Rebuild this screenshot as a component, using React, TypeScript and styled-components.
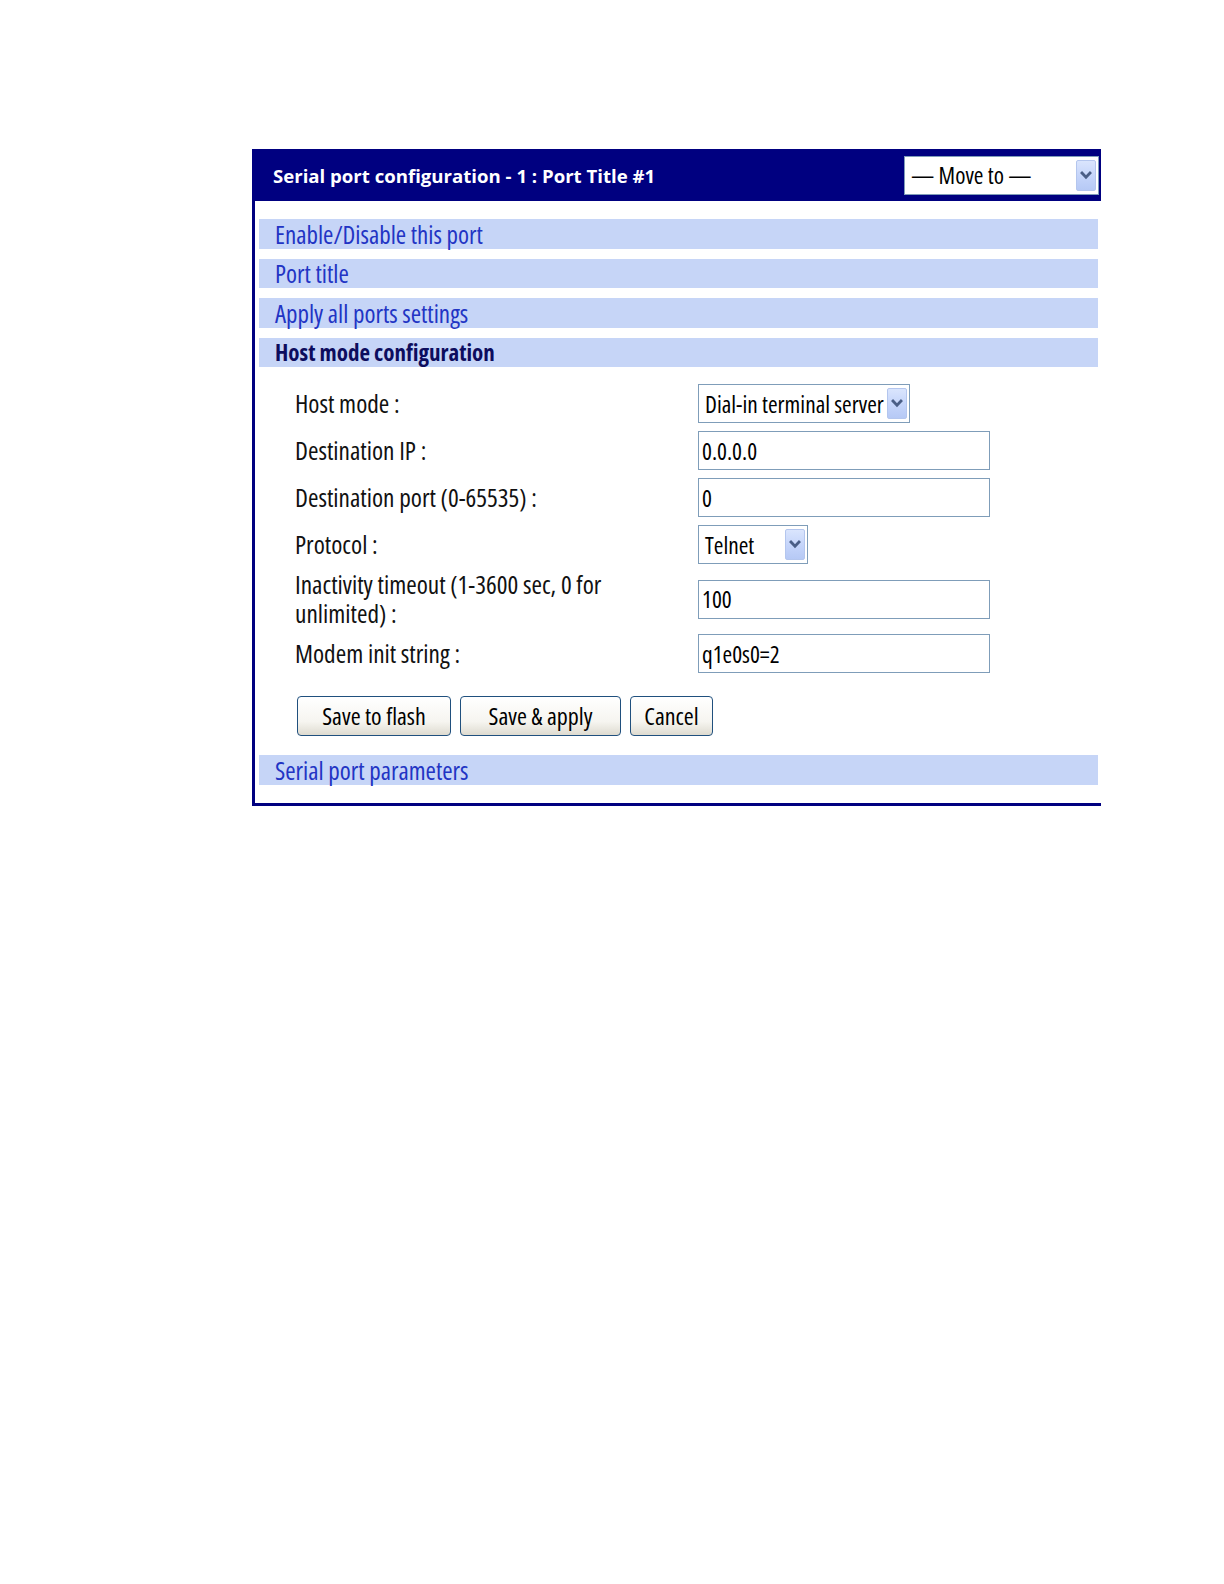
import { createGlobalStyle, styled } from "styled-components";

const navy = "#000080";
const barBlue = "#c6d5f7";
const linkBlue = "#2234c4";
const fieldBorder = "#7f9db9";
const uiFont = `"Open Sans", "DejaVu Sans", sans-serif`;

const GlobalStyle = createGlobalStyle`
  html, body {
    margin: 0;
    padding: 0;
    background: #fff;
  }
  body {
    font-family: ${uiFont};
  }
`;

const Page = styled.div`
  padding: 149px 0 0 252px;
`;

const Panel = styled.div`
  width: 849px;
  box-sizing: border-box;
  border-left: 3px solid ${navy};
  border-bottom: 3px solid ${navy};
  background: #fff;
`;

const Header = styled.div`
  height: 52px;
  margin-left: -3px;
  background: ${navy};
  display: flex;
  align-items: center;
  justify-content: space-between;
  padding: 0 2px 0 21px;
`;

const Title = styled.h1`
  margin: 0;
  color: #fff;
  font-family: ${uiFont};
  font-weight: 700;
  font-size: 18.6px;
`;

const Body = styled.div`
  padding: 18px 3px 18px 4px;
`;

const SectionBar = styled.div<{ $active?: boolean }>`
  height: 29.5px;
  margin-bottom: 10px;
  background: ${barBlue};
  display: flex;
  align-items: center;
  padding-left: 16px;
  font-family: ${uiFont};
  font-stretch: condensed;
  font-size: ${(p) => (p.$active ? "23px" : "25px")};
  font-weight: ${(p) => (p.$active ? 700 : 400)};
  color: ${(p) => (p.$active ? "#0d0d5e" : linkBlue)};
  cursor: pointer;
  &:last-child {
    margin-bottom: 0;
  }
`;

const Form = styled.div`
  display: grid;
  grid-template-columns: 403px 1fr;
  grid-template-rows: repeat(4, 47px) 62px 47px;
  align-items: center;
  padding: 3px 0 0 36px;
`;

const Label = styled.div`
  font-family: ${uiFont};
  font-stretch: condensed;
  font-size: 25.3px;
  line-height: 29.3px;
  color: #111;
  width: 320px;
`;

const TextField = styled.input`
  width: 292px;
  height: 39px;
  box-sizing: border-box;
  border: 1px solid ${fieldBorder};
  padding: 0 3px;
  font-family: ${uiFont};
  font-stretch: condensed;
  font-size: 23.3px;
  color: #000;
  outline: none;
`;

const SelectBox = styled.div<{ $width: number }>`
  width: ${(p) => p.$width}px;
  height: 39px;
  box-sizing: border-box;
  border: 1px solid ${fieldBorder};
  background: #fff;
  display: flex;
  align-items: center;
  justify-content: space-between;
  padding: 3px 2px 3px 6px;
  font-family: ${uiFont};
  font-stretch: condensed;
  font-size: 23.3px;
  color: #000;
  white-space: nowrap;
`;

const ArrowButton = styled.span`
  width: 20px;
  align-self: stretch;
  box-sizing: border-box;
  border: 1px solid #b4c6ee;
  border-radius: 2px;
  background: linear-gradient(180deg, #dae5fd 0%, #c4d4fa 55%, #b6c9f5 100%);
  display: flex;
  align-items: center;
  justify-content: center;
`;

const Buttons = styled.div`
  display: flex;
  gap: 9px;
  padding: 18.5px 0 19px 38px;
`;

const Button = styled.button<{ $width: number }>`
  width: ${(p) => p.$width}px;
  height: 40.5px;
  border: 1px solid #20507e;
  border-radius: 4px;
  background: linear-gradient(180deg, #ffffff 0%, #f6f5f0 65%, #dedbd0 100%);
  font-family: ${uiFont};
  font-stretch: condensed;
  font-size: 24px;
  color: #000;
  padding: 0;
  cursor: pointer;
`;

function Chevron() {
  return (
    <svg width="12" height="9" viewBox="0 0 12 9">
      <polyline
        points="2,2 6,6.2 10,2"
        fill="none"
        stroke="#4a5e86"
        strokeWidth="2.8"
        strokeLinecap="square"
      />
    </svg>
  );
}

function Select(props: { value: string; width: number }) {
  return (
    <SelectBox $width={props.width}>
      <span>{props.value}</span>
      <ArrowButton>
        <Chevron />
      </ArrowButton>
    </SelectBox>
  );
}

const sections = [
  "Enable/Disable this port",
  "Port title",
  "Apply all ports settings",
];

export default function App() {
  return (
    <Page>
      <GlobalStyle />
      <Panel>
        <Header>
          <Title>Serial port configuration - 1 : Port Title #1</Title>
          <Select value="— Move to —" width={195} />
        </Header>
        <Body>
          {sections.map((s) => (
            <SectionBar key={s}>{s}</SectionBar>
          ))}
          <SectionBar $active>Host mode configuration</SectionBar>
          <Form>
            <Label>Host mode :</Label>
            <Select value="Dial-in terminal server" width={212} />
            <Label>Destination IP :</Label>
            <TextField defaultValue="0.0.0.0" />
            <Label>Destination port (0-65535) :</Label>
            <TextField defaultValue="0" />
            <Label>Protocol :</Label>
            <Select value="Telnet" width={110} />
            <Label>Inactivity timeout (1-3600 sec, 0 for unlimited) :</Label>
            <TextField defaultValue="100" />
            <Label>Modem init string :</Label>
            <TextField defaultValue="q1e0s0=2" />
          </Form>
          <Buttons>
            <Button $width={154}>Save to flash</Button>
            <Button $width={161}>Save &amp; apply</Button>
            <Button $width={83}>Cancel</Button>
          </Buttons>
          <SectionBar>Serial port parameters</SectionBar>
        </Body>
      </Panel>
    </Page>
  );
}
